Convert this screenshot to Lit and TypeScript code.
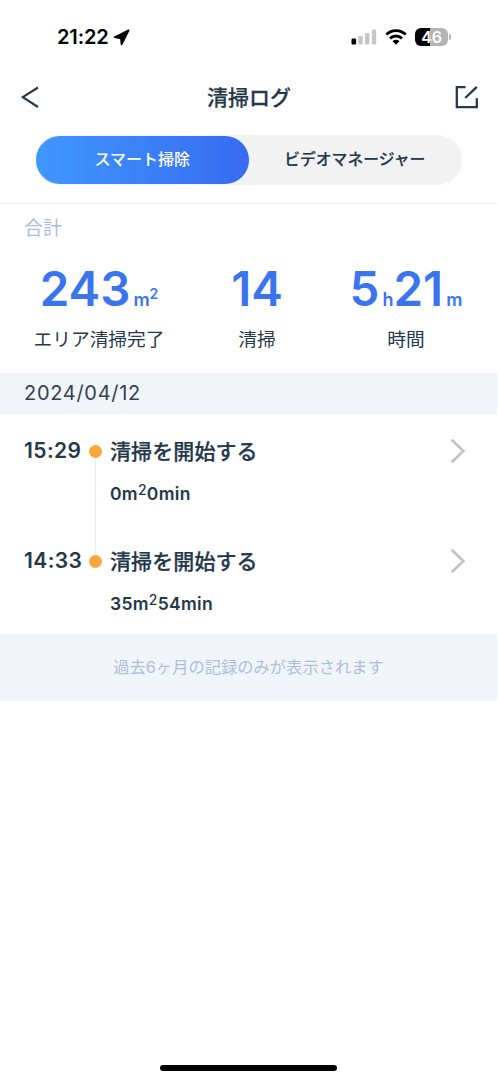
import { LitElement, html, css } from "lit";
import { customElement, property } from "lit/decorators.js";

interface LogEntry {
  time: string;
  title: string;
  area: number;
  minutes: number;
}

const entries: LogEntry[] = [
  { time: "15:29", title: "清掃を開始する", area: 0, minutes: 0 },
  { time: "14:33", title: "清掃を開始する", area: 35, minutes: 54 },
];

@customElement("status-bar")
class StatusBar extends LitElement {
  static styles = css`
    :host { display: flex; height: 74px; box-sizing: border-box; padding: 24px 46px 24px 57px; align-items: center; color: #000; }
    .clock { font-size: 20px; line-height: 26px; font-weight: 600; letter-spacing: -0.1px; }
    .arrow { margin-left: 4px; }
    .spacer { flex: 1; }
    svg { display: block; }
    .wifi { margin: 0 8px 0 8px; }
    .battery { display: flex; align-items: center; }
    .cell { width: 33px; height: 18px; border-radius: 6px; background: linear-gradient(90deg, #000 46%, #b4b4b4 46%); color: #fff; font-size: 16px; line-height: 18px; font-weight: 600; text-align: center; letter-spacing: -0.3px; }
    .tip { width: 2px; height: 6px; border-radius: 0 2px 2px 0; background: #b4b4b4; margin-left: 1px; }
  `;
  render() {
    return html`
      <span class="clock">21:22</span>
      <svg class="arrow" width="17" height="17" viewBox="0 0 17 17"><path d="M15.6 1.4 1.6 8.2 8 9.3 8.6 15.4z" fill="#000" stroke="#000" stroke-width="1.8" stroke-linejoin="round"/></svg>
      <span class="spacer"></span>
      <svg width="26" height="16" viewBox="0 0 26 16">
        <rect x="0.5" y="9.5" width="4.6" height="6" rx="1.2" fill="#000"/>
        <rect x="7.3" y="7" width="4.4" height="8.5" rx="1.2" fill="#c6c6c6"/>
        <rect x="14" y="4" width="4.4" height="11.5" rx="1.2" fill="#c6c6c6"/>
        <rect x="20.8" y="0.5" width="4.4" height="15" rx="1.2" fill="#c6c6c6"/>
      </svg>
      <svg class="wifi" width="22" height="16" viewBox="0 0 22 16" fill="none" stroke="#000" stroke-width="2.9">
        <path d="M1.3 5.5a14 14 0 0 1 19.4 0"/>
        <path d="M5 9.4a8.8 8.8 0 0 1 12 0"/>
        <path d="M11 15.8 7.5 12.3a5 5 0 0 1 7 0z" fill="#000" stroke="none"/>
      </svg>
      <div class="battery"><div class="cell">46</div><div class="tip"></div></div>
    `;
  }
}

@customElement("log-entry")
class LogEntryRow extends LitElement {
  @property({ attribute: false }) entry!: LogEntry;
  @property({ type: Boolean }) linked = false;
  static styles = css`
    :host { display: grid; grid-template-columns: 64px 14px 1fr 16px; column-gap: 0; height: 110px; padding: 0 31px 0 24px; box-sizing: border-box; color: #24384a; }
    .time { font-size: 21px; line-height: 28px; font-weight: 600; padding-top: 23px; letter-spacing: 0.4px; }
    .rail { display: flex; flex-direction: column; align-items: center; padding-top: 31px; }
    .dot { width: 13px; height: 13px; border-radius: 50%; background: #fba63c; flex: none; }
    .line { width: 1px; height: 97px; background: #ececec; flex: none; }
    .body { padding: 23px 0 0 8px; }
    .title { font-size: 21px; line-height: 30px; font-weight: 500; white-space: nowrap; letter-spacing: 0.1px; -webkit-text-stroke: 0.25px currentColor; }
    .detail { font-size: 17.5px; line-height: 26px; font-weight: 600; margin-top: 14px; letter-spacing: 0.3px; }
    .detail sup { font-size: 14px; font-weight: 500; line-height: 0; vertical-align: 5.5px; }
    .chev { margin-top: 23.5px; display: block; }
  `;
  render() {
    const e = this.entry;
    return html`
      <div class="time">${e.time}</div>
      <div class="rail"><div class="dot"></div>${this.linked ? html`<div class="line"></div>` : ""}</div>
      <div class="body">
        <div class="title">${e.title}</div>
        <div class="detail">${e.area}m<sup>2</sup>${e.minutes}min</div>
      </div>
      <svg class="chev" width="16" height="26" viewBox="0 0 16 26" fill="none" stroke="#c2c2c2" stroke-width="2.6"><path d="M1.6 1.8 13.4 13 1.6 24.2"/></svg>
    `;
  }
}

@customElement("app-root")
class AppRoot extends LitElement {
  static styles = css`
    :host { display: flex; flex-direction: column; width: 497px; height: 1080px; background: #fff; color: #24384a; font-family: Inter, "Noto Sans CJK JP", sans-serif; overflow: hidden; }
    svg { display: block; }
    .nav { display: flex; align-items: center; justify-content: space-between; height: 46px; padding: 0 18px 0 21px; }
    .nav h1 { margin: 0; font-size: 21px; line-height: 30px; font-weight: 500; padding-top: 1px; -webkit-text-stroke: 0.25px currentColor; }
    .tabs { display: flex; margin: 15px 35px 0; height: 50px; border-radius: 25px; background: #f2f2f2; padding: 1px; box-sizing: border-box; }
    .tab { flex: 1; border-radius: 24px; font-size: 15.8px; line-height: 48px; font-weight: 500; text-align: center; white-space: nowrap; -webkit-text-stroke: 0.2px currentColor; }
    .active { background: linear-gradient(90deg, #3f97ff, #376bf1); color: #fff; -webkit-text-stroke: 0; font-size: 16px; line-height: 47px; }
    .totals { margin-top: 18px; border-top: 1px solid #f0f0f0; height: 170px; box-sizing: border-box; }
    .caption { padding: 12px 0 0 24px; font-size: 19px; line-height: 26px; color: #adbedb; }
    .stats { display: flex; margin-top: 17px; }
    .stat { text-align: center; white-space: nowrap; }
    .area { width: 198px; }
    .count { width: 118px; }
    .duration { width: 180px; }
    .value { color: #3a75ee; font-size: 47.5px; line-height: 60px; font-weight: 600; height: 60px; }
    .value small { font-size: 18px; font-weight: 600; margin-left: 3px; }
    .value sup { font-size: 14px; line-height: 0; vertical-align: 7px; }
    .name { font-size: 18.7px; line-height: 26px; margin-top: 8px; }
    .date { height: 41px; background: #f1f5f9; padding-left: 24px; font-size: 20px; line-height: 40px; letter-spacing: 0.7px; color: #33424f; }
    .note { height: 67px; background: #f1f5f9; color: #adbedb; font-size: 16.3px; line-height: 66px; text-align: center; }
    .home { width: 177px; height: 6px; border-radius: 3px; background: #000; margin: auto auto 9px 160px; }
  `;
  render() {
    return html`
      <status-bar></status-bar>
      <div class="nav">
        <svg width="22" height="24" viewBox="0 0 22 24" fill="none" stroke="#24384a" stroke-width="2.1"><path d="M17 2.5 1.8 12.2 17 22"/></svg>
        <h1>清掃ログ</h1>
        <svg width="24" height="24" viewBox="0 0 24 24" fill="none" stroke="#24384a" stroke-width="2.3"><path d="M10.5 2.2H1.8V22.2H21.8V13.2M21.8 1.8 10.2 13"/></svg>
      </div>
      <div class="tabs"><div class="tab active">スマート掃除</div><div class="tab">ビデオマネージャー</div></div>
      <div class="totals">
        <div class="caption">合計</div>
        <div class="stats">
          <div class="stat area"><div class="value">243<small>m<sup>2</sup></small></div><div class="name">エリア清掃完了</div></div>
          <div class="stat count"><div class="value">14</div><div class="name">清掃</div></div>
          <div class="stat duration"><div class="value">5<small>h</small>21<small>m</small></div><div class="name">時間</div></div>
        </div>
      </div>
      <div class="date">2024/04/12</div>
      ${entries.map((e, i) => html`<log-entry .entry=${e} ?linked=${i < entries.length - 1}></log-entry>`)}
      <div class="note">過去6ヶ月の記録のみが表示されます</div>
      <div class="home"></div>
    `;
  }
}
